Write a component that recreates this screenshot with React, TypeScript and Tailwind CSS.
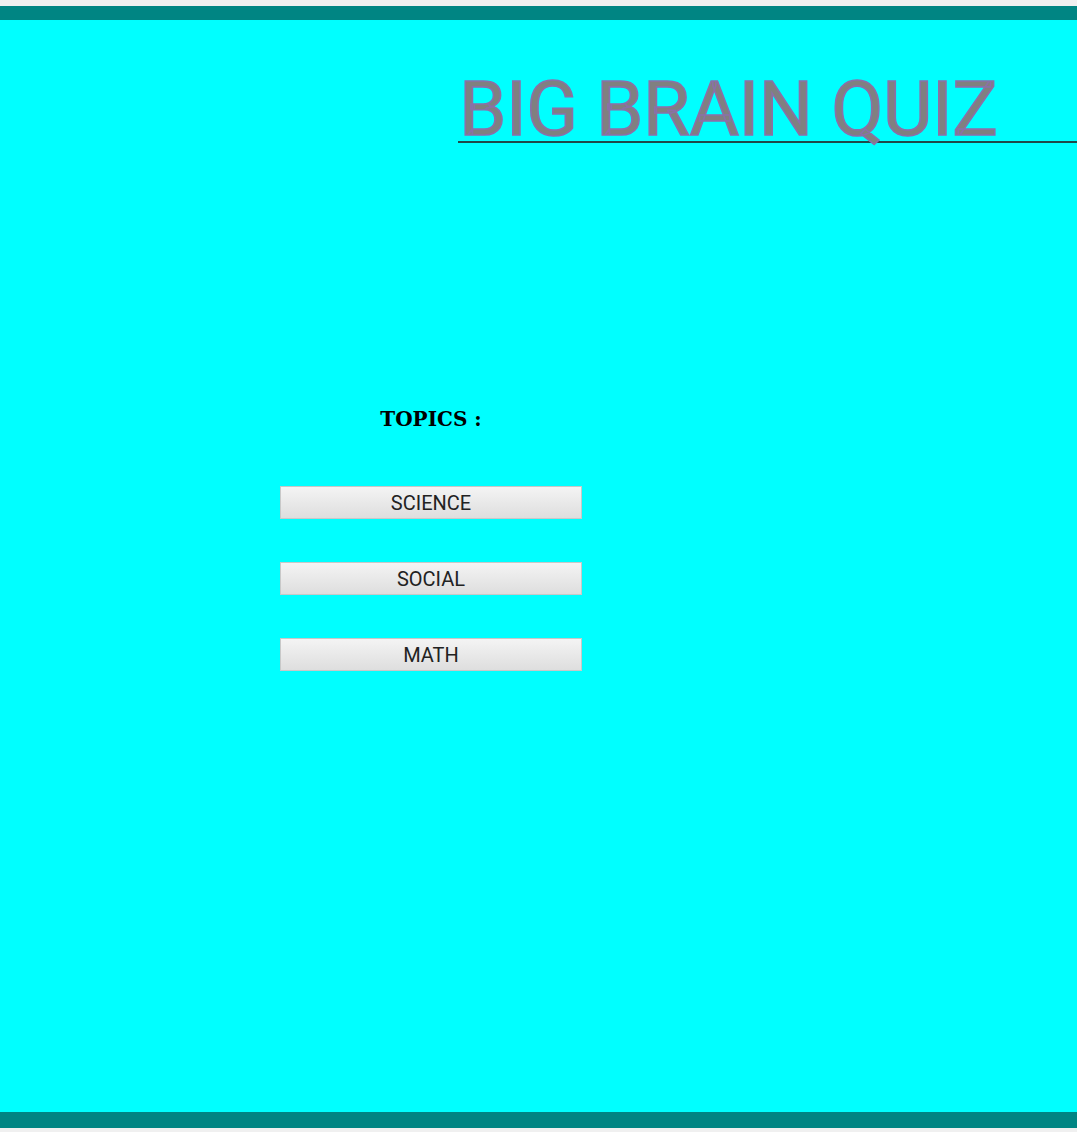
import React from 'react';

const TOPICS = ['SCIENCE', 'SOCIAL', 'MATH'];

export default function App() {
  return (
    <div className="min-h-[1132px] bg-[#f0f0f0] pt-[6px] pb-[4px] flex flex-col font-['Roboto',sans-serif]">
      <div className="h-[14px] bg-[#008583]" />
      <main className="flex-1 h-[1092px] bg-[#00ffff] flex flex-col">
        <h1 className="ml-[458px] mt-[52px] h-[71px] border-b-2 border-[#1f4a4a] pl-[1px] text-[76px] font-normal leading-[74px] text-[#808080] [-webkit-text-stroke:1.6px_#8a70a8] tracking-[-0.4px]">
          BIG BRAIN QUIZ
        </h1>
        <div className="ml-[280px] mt-[266px] w-[302px] flex flex-col items-center">
          <h2 className="font-['DejaVu_Serif',serif] font-bold text-[20px] leading-none text-black">
            TOPICS :
          </h2>
          <div className="mt-[57px] w-full flex flex-col gap-[43px]">
            {TOPICS.map((t) => (
              <button
                key={t}
                className="h-[33px] w-full border border-[#c8c8c8] bg-gradient-to-b from-[#f4f4f4] to-[#dedede] text-[20px] leading-none text-[#222]"
              >
                {t}
              </button>
            ))}
          </div>
        </div>
      </main>
      <div className="h-[16px] bg-[#008583]" />
    </div>
  );
}
